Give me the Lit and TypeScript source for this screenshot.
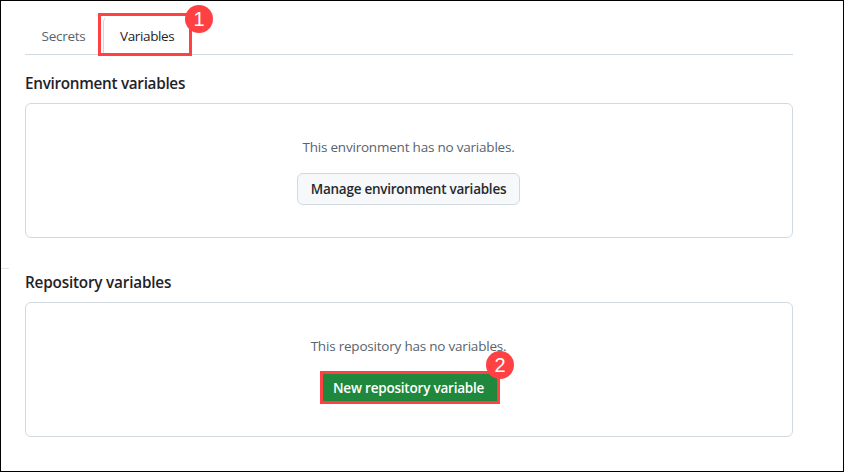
import { LitElement, html, css } from "lit";
import { customElement } from "lit/decorators.js";

@customElement("app-root")
export class AppRoot extends LitElement {
  static styles = css`
    :host {
      display: block;
      box-sizing: border-box;
      height: 472px;
      border: 1px solid #000;
      padding: 12px 50px 0 24px;
      position: relative;
      background: #fff;
      color: #1f2328;
      font: 13.5px/20px "Open Sans", "Noto Sans", sans-serif;
    }
    * { box-sizing: border-box; }
    .tabs {
      display: flex;
      height: 42px;
      border-bottom: 1px solid #d1d9e0;
    }
    .tab { white-space: nowrap; padding-top: 13px; }
    .secrets { width: 73px; padding-left: 16.5px; color: #59636e; letter-spacing: -0.25px; }
    .selected {
      position: relative;
      width: 94px;
      height: 43px;
      border: 3px solid #ff4144;
      background: #fff;
      padding: 10px 0 0 19px;
      letter-spacing: -0.36px;
    }
    .edge {
      position: absolute;
      left: 2px;
      top: 0;
      width: 12px;
      height: 37px;
      border: solid #d1d9e0;
      border-width: 1px 0 0 1px;
      border-top-color: transparent;
      border-radius: 6px 0 0 0;
    }
    h2 {
      margin: 0;
      font-size: 15.3px;
      line-height: 24px;
      font-weight: 600;
      white-space: nowrap;
      padding-top: 16px;
      height: 48px;
    }
    .env { letter-spacing: -0.3px; }
    .repo { margin-top: 16px; letter-spacing: -0.2px; }
    .panel {
      height: 135px;
      border: 1px solid #d1d9e0;
      border-radius: 6px;
      display: flex;
      flex-direction: column;
      align-items: center;
      padding-top: 33px;
    }
    .note { color: #59636e; white-space: nowrap; letter-spacing: -0.21px; margin-right: 1px; }
    button {
      font: inherit;
      font-weight: 600;
      letter-spacing: -0.25px;
      white-space: nowrap;
      padding: 0;
      position: relative;
    }
    .manage {
      margin: 16px 1px 0 0;
      width: 223px;
      height: 32px;
      color: #25292e;
      background: #f6f8fa;
      border: 1px solid #d1d9e0;
      border-radius: 6px;
    }
    .create {
      margin: 15px 0 0 2px;
      width: 180px;
      height: 33px;
      color: #fff;
      background: #1f883d;
      border: 3px solid #ff4144;
      text-align: left;
      padding: 1px 0 0 10px;
      letter-spacing: -0.21px;
    }
    .badge {
      position: absolute;
      width: 28px;
      height: 28px;
      border-radius: 50%;
      background: #ff4144;
      color: #fff;
      font: 20px/28px "Liberation Sans", Arial, sans-serif;
      letter-spacing: 0;
      text-align: center;
    }
    .one { left: 84px; top: -11px; }
    .two { left: 163px; top: -23px; }
    .stub {
      position: absolute;
      left: 0;
      top: 267px;
      width: 8px;
      height: 1px;
      background: #dfe4e9;
    }
  `;

  render() {
    return html`
      <div class="tabs">
        <div class="tab secrets"><span>Secrets</span></div>
        <div class="tab selected">
          <i class="edge"></i><span>Variables</span><span class="badge one">1</span>
        </div>
      </div>
      <h2 class="env"><span>Environment variables</span></h2>
      <section class="panel">
        <div class="note">This environment has no variables.</div>
        <button class="manage">Manage environment variables</button>
      </section>
      <h2 class="repo"><span>Repository variables</span></h2>
      <section class="panel">
        <div class="note">This repository has no variables.</div>
        <button class="create">New repository variable<span class="badge two">2</span></button>
      </section>
      <i class="stub"></i>
    `;
  }
}
